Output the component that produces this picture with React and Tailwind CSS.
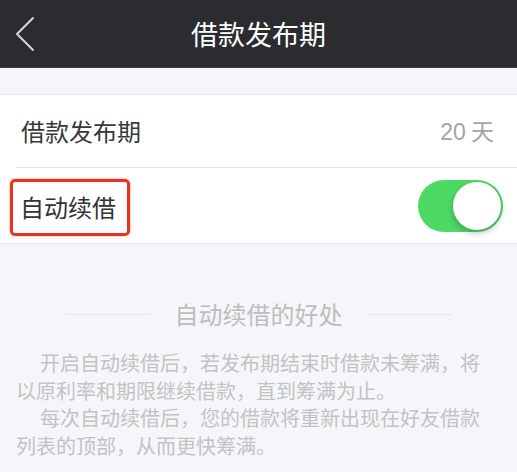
const font = { fontFamily: '"Noto Sans CJK SC", "Noto Sans", sans-serif' };

const Toggle = ({ on }) => (
  <div
    className={`flex h-[52px] w-[85px] items-center rounded-full p-[2px] ${
      on ? "justify-end bg-[#4cd964]" : "justify-start bg-[#e5e5e5]"
    }`}
  >
    <div className="h-[48px] w-[48px] rounded-full bg-white shadow-[0_3px_6px_rgba(0,0,0,0.25)]" />
  </div>
);

export default function App() {
  return (
    <div className="min-h-[472px] w-full bg-[#f5f6f9]" style={font}>
      <div className="grid h-[68px] grid-cols-[64px_1fr_64px] items-center bg-[#2b2c30] border-b border-[#3a3b3f]">
        <button className="flex h-full items-center pl-[14px]">
          <svg width="22" height="36" viewBox="0 0 22 36" fill="none">
            <polyline
              points="19,2 3,18 19,34"
              stroke="#d6d6d6"
              strokeWidth="2"
              strokeLinecap="round"
              strokeLinejoin="round"
            />
          </svg>
        </button>
        <h1 className="text-center text-[27px] leading-none text-white">借款发布期</h1>
        <div />
      </div>

      <div className="h-[26px]" />

      <div className="border-y border-[#e6e7ea] bg-white">
        <div className="ml-4 flex h-[73px] items-center justify-between border-b border-[#e3e4e7] pl-[5px] pr-[23px]">
          <span className="text-[24px] leading-none text-[#383838]">借款发布期</span>
          <span className="text-[23px] leading-none text-[#a3a3a3]">
            <span className="font-['Liberation_Sans']">20</span> 天
          </span>
        </div>
        <div className="flex h-[75px] items-center justify-between pl-[10px] pr-[14px]">
          <div className="mt-[3px] flex h-[57px] w-[120px] items-center rounded-[5px] border-[3px] border-[#e8331f] pl-[7px] shadow-[0_0_3px_rgba(232,51,31,0.45)]">
            <span className="text-[24px] leading-none text-[#333]">自动续借</span>
          </div>
          <Toggle on />
        </div>
      </div>

      <div className="mt-[52px] flex items-center justify-center">
        <div className="h-px w-[84px] bg-[#e5e7ea]" />
        <h2 className="mx-[25px] text-[24px] leading-[36px] text-[#bdbdbd]">自动续借的好处</h2>
        <div className="h-px w-[84px] bg-[#e5e7ea]" />
      </div>

      <div className="mt-[17px] pl-4 pr-[24px] text-[20px] leading-[27.5px] text-[#c3c3c3]">
        <p className="indent-[24px]">开启自动续借后，若发布期结束时借款未筹满，将以原利率和期限继续借款，直到筹满为止。</p>
        <p className="indent-[24px]">每次自动续借后，您的借款将重新出现在好友借款列表的顶部，从而更快筹满。</p>
      </div>
    </div>
  );
}
